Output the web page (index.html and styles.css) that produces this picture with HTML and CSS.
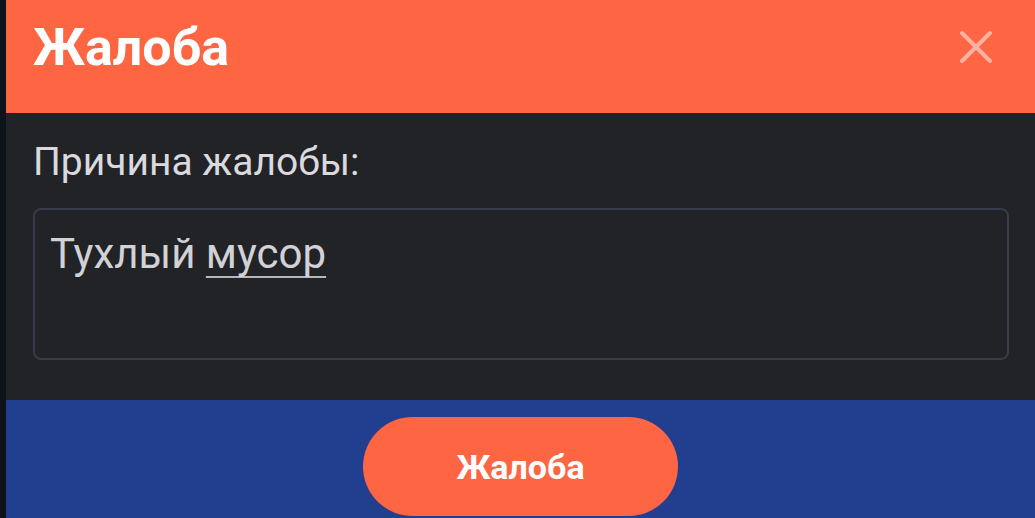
FILE: index.html
```html
<!DOCTYPE html>
<html lang="ru">
  <head>
    <meta charset="UTF-8" />
    <meta name="viewport" content="width=device-width, initial-scale=1.0" />
    <title>Жалоба</title>
    <link rel="stylesheet" href="styles.css">
  </head>
  <body>
    <div class="modal">
      <div class="modal-header">
        <h1>Жалоба</h1>
        <button class="close" aria-label="Закрыть">
          <svg width="34" height="34" viewBox="0 0 34 34">
            <path d="M3 3 L31 31 M31 3 L3 31" stroke="currentColor" stroke-width="4" stroke-linecap="round" fill="none" />
          </svg>
        </button>
      </div>

      <div class="modal-body">
        <label class="reason-label">Причина жалобы:</label>
        <div class="reason-box">Тухлый <span class="misspelled">мусор</span></div>
      </div>

      <div class="modal-footer">
        <button class="submit">Жалоба</button>
      </div>
    </div>
  </body>
</html>
```

FILE: styles.css
```css
body {
  margin: 0;
  background-color: #0e131a;
  font-family: Roboto, "Noto Sans", sans-serif;
  height: 518px;
  overflow: hidden;
}

.modal {
  margin-left: 6px;
  display: flex;
  flex-direction: column;
  height: 518px;
}

.modal-header {
  height: 113px;
  box-sizing: border-box;
  background-color: #fd6543;
  display: flex;
  justify-content: space-between;
  align-items: flex-start;
  padding: 17px 42px 0 27px;
}

.modal-header h1 {
  margin: 0;
  color: #fff;
  font-size: 52px;
  font-weight: bold;
}

.close {
  background: none;
  border: none;
  padding: 0;
  margin-top: 13px;
  color: rgba(255, 255, 255, 0.5);
  cursor: pointer;
}

.modal-body {
  background-color: #222327;
  padding: 26px 26px 40px 27px;
}

.reason-label {
  display: block;
  color: #d9d9de;
  font-size: 39px;
}

.reason-box {
  margin-top: 23px;
  height: 152px;
  box-sizing: border-box;
  border: 2px solid #363c4b;
  border-radius: 8px;
  padding: 19px 15px 0;
  color: #d2d2d6;
  font-size: 42px;
}

.misspelled {
  text-decoration: underline;
  text-decoration-color: #b8b8bc;
  text-decoration-thickness: 2px;
  text-decoration-skip-ink: none;
  text-underline-offset: 8px;
}

.modal-footer {
  flex: 1;
  background-color: #213e8f;
  display: flex;
  justify-content: center;
  padding-top: 17px;
}

.submit {
  width: 315px;
  height: 99px;
  border: none;
  border-radius: 50px;
  background-color: #fd6543;
  color: #fff;
  font-family: Roboto, "Noto Sans", sans-serif;
  font-size: 34px;
  font-weight: bold;
  cursor: pointer;
}
```
